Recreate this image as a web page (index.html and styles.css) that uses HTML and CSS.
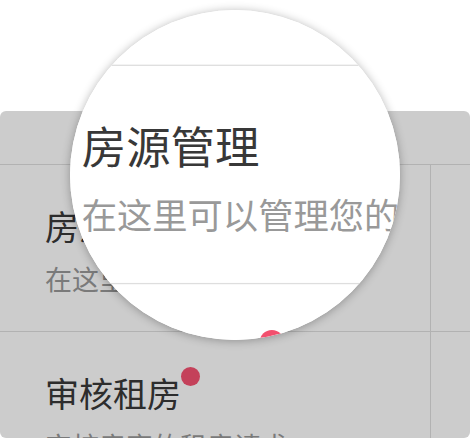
FILE: index.html
```html
<!DOCTYPE html>
<html lang="zh-CN">
<head>
<meta charset="utf-8">
<title>房源管理</title>
<link rel="stylesheet" href="styles.css">
</head>
<body>
<div class="page">
  <div class="card dim">
    <div class="card-head"></div>
    <div class="grid">
      <div class="cell">
        <div class="title">房源管理</div>
        <div class="sub">在这里可以管理您的房源</div>
      </div>
      <div class="cell side"></div>
      <div class="cell">
        <div class="title">审核租房<span class="dot"></span></div>
        <div class="sub">审核房客的租房请求</div>
      </div>
      <div class="cell side"></div>
    </div>
  </div>

  <div class="lens">
    <div class="lens-page">
      <div class="card">
        <div class="card-head"></div>
        <div class="grid">
          <div class="cell">
            <div class="title">房源管理</div>
            <div class="sub">在这里可以管理您的房源</div>
          </div>
          <div class="cell side"></div>
          <div class="cell">
            <div class="title">审核租房<span class="dot"></span></div>
            <div class="sub">审核房客的租房请求</div>
          </div>
          <div class="cell side"></div>
        </div>
      </div>
    </div>
  </div>
</div>
</body>
</html>
```

FILE: styles.css
```css
* { box-sizing: border-box; }
html, body { margin: 0; padding: 0; background: #fff; }
body {
  width: 471px;
  height: 438px;
  overflow: hidden;
  font-family: "Noto Sans CJK SC", "Noto Sans", sans-serif;
}
.page {
  position: relative;
  width: 471px;
  height: 438px;
  padding-top: 111px;
}
.card {
  --bg: #ffffff;
  --line: #dedede;
  --title: #383838;
  --sub: #999999;
  --dot: #f2506e;
  width: 470px;
  height: 327px;
  background: var(--bg);
  border-radius: 6px;
  overflow: hidden;
}
.card.dim {
  --bg: #cccccc;
  --line: #b2b2b2;
  --title: #2d2d2d;
  --sub: #7a7a7a;
  --dot: #c4415a;
}
.card-head {
  height: 54px;
  border-bottom: 1px solid var(--line);
}
.grid {
  display: grid;
  grid-template-columns: 431px 1fr;
  grid-auto-rows: 167px;
}
.cell {
  padding: 44px 0 0 45px;
  border-bottom: 1px solid var(--line);
  border-right: 1px solid var(--line);
  white-space: nowrap;
}
.cell.side { border-right: 0; padding: 0; }
.title {
  position: relative;
  display: inline-block;
  font-size: 34px;
  line-height: 34px;
  color: var(--title);
}
.dot {
  position: absolute;
  right: -19px;
  top: -9px;
  width: 19px;
  height: 19px;
  border-radius: 50%;
  background: var(--dot);
}
.sub {
  margin-top: 20px;
  font-size: 27px;
  line-height: 27px;
  color: var(--sub);
}
.lens {
  position: absolute;
  left: 70px;
  top: 10px;
  width: 330px;
  height: 330px;
  border-radius: 50%;
  overflow: hidden;
  background: #fff;
  box-shadow: 0 1px 10px rgba(0, 0, 0, 0.3);
}
.lens-page {
  width: 471px;
  height: 438px;
  padding-top: 111px;
  transform-origin: 0 0;
  transform: translate(-47.1px, -159.7px) scale(1.307);
}
```
